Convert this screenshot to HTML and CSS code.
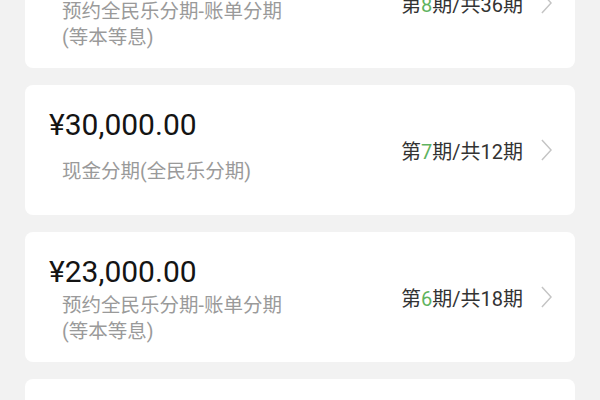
FILE: index.html
```html
<!DOCTYPE html>
<html lang="zh-CN">
<head>
    <meta charset="UTF-8">
    <meta name="viewport" content="width=device-width, initial-scale=1.0">
    <title>分期记录</title>
    <link rel="stylesheet" href="styles.css">
</head>
<body>
    <main class="bill-list">
        <div class="bill-card">
            <div class="bill-info">
                <div class="bill-amount">¥50,000.00</div>
                <div class="bill-desc">预约全民乐分期-账单分期<br>(等本等息)</div>
            </div>
            <div class="bill-term">第<span class="term-now">8</span>期/共36期</div>
            <svg class="chevron" viewBox="0 0 12 24"><polyline points="1,1 11,12 1,23"/></svg>
        </div>
        <div class="bill-card">
            <div class="bill-info">
                <div class="bill-amount">¥30,000.00</div>
                <div class="bill-desc">现金分期(全民乐分期)</div>
            </div>
            <div class="bill-term">第<span class="term-now">7</span>期/共12期</div>
            <svg class="chevron" viewBox="0 0 12 24"><polyline points="1,1 11,12 1,23"/></svg>
        </div>
        <div class="bill-card">
            <div class="bill-info">
                <div class="bill-amount">¥23,000.00</div>
                <div class="bill-desc">预约全民乐分期-账单分期<br>(等本等息)</div>
            </div>
            <div class="bill-term">第<span class="term-now">6</span>期/共18期</div>
            <svg class="chevron" viewBox="0 0 12 24"><polyline points="1,1 11,12 1,23"/></svg>
        </div>
        <div class="bill-card">
            <div class="bill-info">
                <div class="bill-amount">¥10,000.00</div>
                <div class="bill-desc">现金分期(全民乐分期)</div>
            </div>
            <div class="bill-term">第<span class="term-now">3</span>期/共12期</div>
            <svg class="chevron" viewBox="0 0 12 24"><polyline points="1,1 11,12 1,23"/></svg>
        </div>
    </main>
</body>
</html>
```

FILE: styles.css
```css
body {
    margin: 0;
    padding: 0;
    background-color: #f2f2f2;
    font-family: Roboto, "Noto Sans CJK SC", sans-serif;
    color: #222;
    overflow: hidden;
}

.bill-list {
    display: flex;
    flex-direction: column;
    gap: 17px;
    padding: 0 25px;
    margin-top: -62px;
}

.bill-card {
    display: flex;
    align-items: center;
    height: 130px;
    background-color: #fff;
    border-radius: 8px;
    padding: 0 23px 0 24px;
    box-sizing: border-box;
}

.bill-info {
    flex: 1;
    align-self: flex-start;
    padding-top: 23px;
}

.bill-amount {
    font-size: 30px;
    line-height: 34px;
    color: #141414;
}

.bill-desc {
    display: flex;
    align-items: center;
    height: 52px;
    margin-top: 4px;
    padding-left: 13px;
    font-size: 19.5px;
    line-height: 26px;
    color: #9a9a9a;
}

.bill-term {
    font-size: 20px;
    color: #333;
    margin-right: 18px;
}

.term-now {
    color: #5fb35f;
}

.chevron {
    width: 11px;
    height: 22px;
    fill: none;
    stroke: #c4c4c4;
    stroke-width: 1.6;
}
```
